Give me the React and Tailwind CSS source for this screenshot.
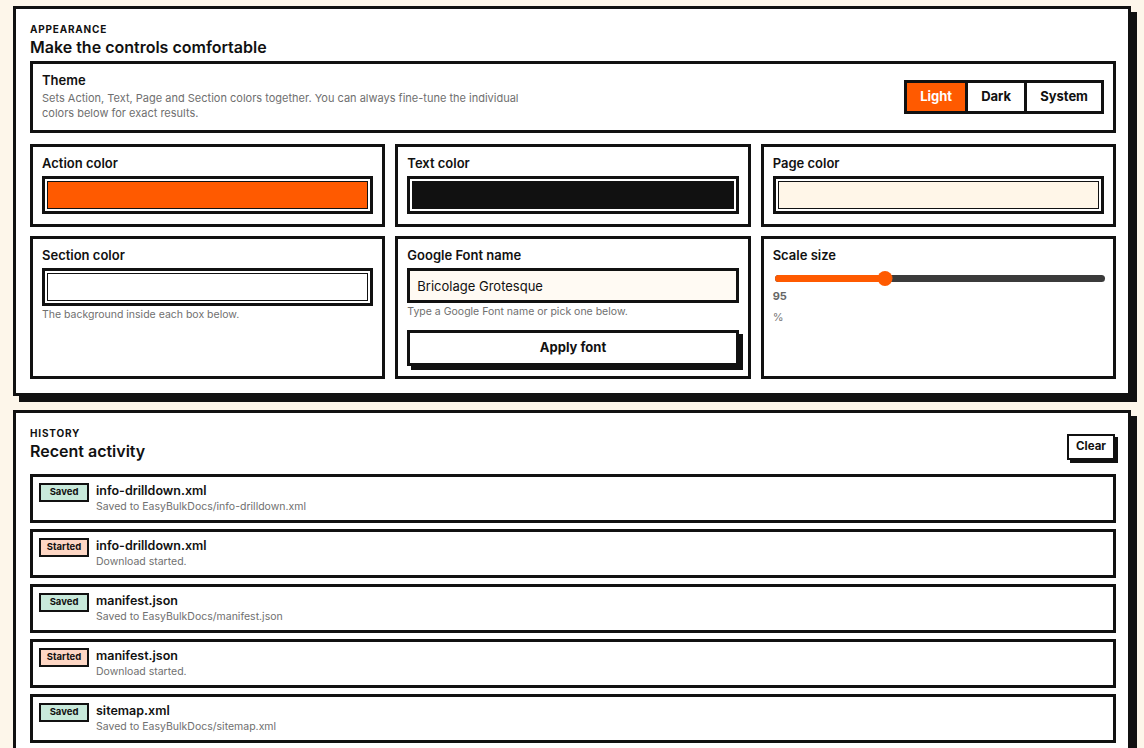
import React, { useState } from 'react';

const FONT = { fontFamily: 'Inter, "Noto Sans", sans-serif' };

const history = [
  { status: 'Saved', file: 'info-drilldown.xml', note: 'Saved to EasyBulkDocs/info-drilldown.xml' },
  { status: 'Started', file: 'info-drilldown.xml', note: 'Download started.' },
  { status: 'Saved', file: 'manifest.json', note: 'Saved to EasyBulkDocs/manifest.json' },
  { status: 'Started', file: 'manifest.json', note: 'Download started.' },
  { status: 'Saved', file: 'sitemap.xml', note: 'Saved to EasyBulkDocs/sitemap.xml' },
];

const Card = ({ children, className = '' }) => (
  <div className={`border-[3px] border-[#111] bg-white px-[9px] pt-[7px] pb-[10px] ${className}`}>
    {children}
  </div>
);

const Label = ({ children }) => (
  <div className="text-[13px] leading-[18px] font-semibold text-[#111] mb-[4px]">{children}</div>
);

const Swatch = ({ color }) => (
  <div className="border-[3px] border-[#111] p-[2px] bg-white">
    <div className="h-[28px] border border-[#111]" style={{ background: color }} />
  </div>
);

const Helper = ({ children }) => (
  <div className="text-[10.5px] leading-[14px] text-[#6f6f6f] mt-[2px]">{children}</div>
);

export default function App() {
  const [theme, setTheme] = useState('Light');
  const scale = 95;
  const pct = ((scale - 80) / 45) * 100;

  return (
    <div className="min-h-screen bg-[#fdf6ea] px-[13px] pt-[6px] pb-6 text-[#111]" style={FONT}>
      <section className="border-[3px] border-[#111] bg-white shadow-[6px_6px_0_#111] pl-[14px] pr-[12px] pt-[12px] pb-[14px]">
        <div className="text-[10px] leading-[16px] font-bold tracking-[0.08em] uppercase">Appearance</div>
        <h2 className="text-[16px] leading-[21px] font-semibold">Make the controls comfortable</h2>

        <div className="mt-[3px] border-[3px] border-[#111] px-[9px] pt-[7px] pb-[9px] flex items-center justify-between">
          <div>
            <div className="text-[13px] leading-[18px] font-semibold">Theme</div>
            <p className="text-[11px] leading-[15px] text-[#6f6f6f] max-w-[500px] mt-[2px]">
              Sets Action, Text, Page and Section colors together. You can always fine-tune the individual colors below for exact results.
            </p>
          </div>
          <div className="flex border-[3px] border-[#111] mt-[2px]">
            {['Light', 'Dark', 'System'].map((t, i) => (
              <button
                key={t}
                onClick={() => setTheme(t)}
                className={`h-[28px] px-[13px] text-[13px] font-bold ${i > 0 ? 'border-l-[3px] border-[#111]' : ''} ${
                  theme === t ? 'bg-[#ff5a00] text-white' : 'bg-white text-[#111]'
                }`}
              >
                {t}
              </button>
            ))}
          </div>
        </div>

        <div className="mt-[11px] grid grid-cols-3 gap-x-[10px] gap-y-[9px]">
          <Card>
            <Label>Action color</Label>
            <Swatch color="#ff5a00" />
          </Card>
          <Card>
            <Label>Text color</Label>
            <Swatch color="#111111" />
          </Card>
          <Card>
            <Label>Page color</Label>
            <Swatch color="#fff6e8" />
          </Card>

          <Card>
            <Label>Section color</Label>
            <Swatch color="#ffffff" />
            <Helper>The background inside each box below.</Helper>
          </Card>
          <Card>
            <Label>Google Font name</Label>
            <input
              defaultValue="Bricolage Grotesque"
              className="w-full h-[35px] border-[3px] border-[#111] bg-[#fffaf3] px-[7px] text-[13px] text-[#111] outline-none"
              style={FONT}
            />
            <Helper>Type a Google Font name or pick one below.</Helper>
            <button className="mt-[11px] w-full h-[36px] border-[3px] border-[#111] bg-white shadow-[4px_4px_0_#111] text-[13px] font-bold">
              Apply font
            </button>
          </Card>
          <Card>
            <Label>Scale size</Label>
            <div className="relative h-[16px] ml-[2px] -mr-[1px] mt-[6px] flex items-center">
              <div className="h-[7px] w-full rounded-full bg-[#3b3b3b]" />
              <div className="absolute left-0 h-[7px] rounded-full bg-[#ff5a00]" style={{ width: `${pct}%` }} />
              <div
                className="absolute w-[15px] h-[15px] rounded-full bg-[#ff5a00] -translate-x-1/2"
                style={{ left: `${pct}%` }}
              />
            </div>
            <div className="text-[11px] leading-[14px] font-bold text-[#666] mt-[3px]">{scale}</div>
            <div className="text-[11px] leading-[14px] text-[#777] mt-[7px]">%</div>
          </Card>
        </div>
      </section>

      <section className="mt-[14px] border-[3px] border-[#111] bg-white shadow-[6px_6px_0_#111] pl-[14px] pr-[12px] pt-[12px] pb-[14px]">
        <div className="flex items-start justify-between">
          <div>
            <div className="text-[10px] leading-[16px] font-bold tracking-[0.08em] uppercase">History</div>
            <h2 className="text-[16px] leading-[21px] font-semibold">Recent activity</h2>
          </div>
          <button className="mt-[9px] mr-[1px] h-[26px] px-[7px] border-[2px] border-[#111] bg-white shadow-[3px_3px_0_#111] text-[11.5px] font-bold">
            Clear
          </button>
        </div>

        <div className="mt-[12px] flex flex-col gap-[6px]">
          {history.map((h, i) => (
            <div key={i} className="border-[3px] border-[#111] px-[6px] pt-[5px] pb-[6px] flex items-start gap-[7px]">
              <span
                className={`mt-[1px] w-[50px] h-[19px] flex items-center justify-center border-[2px] border-[#111] text-[9.5px] font-bold ${
                  h.status === 'Saved' ? 'bg-[#c8eadb]' : 'bg-[#fdd6c4]'
                }`}
              >
                {h.status}
              </span>
              <div>
                <div className="text-[12.5px] leading-[17px] font-semibold">{h.file}</div>
                <div className="text-[10.5px] leading-[14px] text-[#6f6f6f] mt-[1px]">{h.note}</div>
              </div>
            </div>
          ))}
        </div>
      </section>
    </div>
  );
}
